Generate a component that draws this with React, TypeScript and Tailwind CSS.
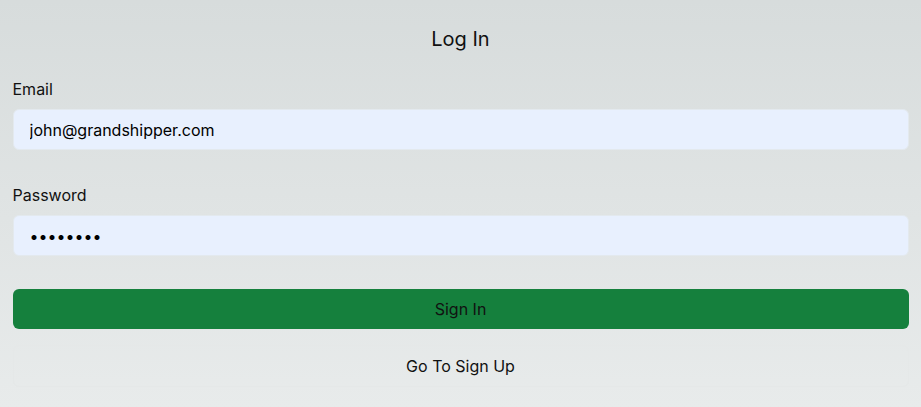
const App = () => {
  return (
    <div
      className="min-h-[407px] bg-gradient-to-b from-[#d7dcdc] to-[#e8ebeb] text-[#111] pt-[25px]"
      style={{ fontFamily: "Inter, 'Noto Sans', sans-serif" }}
    >
      <div className="max-w-4xl mx-auto">
        <h1 className="text-xl leading-7 text-center">Log In</h1>
        <form className="mt-6 flex flex-col">
          <label className="text-base leading-6 mb-2">Email</label>
          <input
            readOnly
            value="john@grandshipper.com"
            className="h-[41px] px-4 rounded-md bg-[#e8f0fe] border border-[#e3e9ee] text-base text-black outline-none"
          />
          <label className="text-base leading-6 mb-2 mt-[33px]">Password</label>
          <input
            readOnly
            type="password"
            value="12345678"
            className="h-[41px] px-4 rounded-md bg-[#e8f0fe] border border-[#e3e9ee] text-base text-black outline-none"
          />
          <button
            type="button"
            className="mt-[33px] h-10 rounded-md bg-[#15803d] text-base text-[#111]"
          >
            Sign In
          </button>
          <button
            type="button"
            className="mt-4 h-[42px] rounded-md border border-[#e5e8e8] text-base text-[#111]"
          >
            Go To Sign Up
          </button>
        </form>
      </div>
    </div>
  );
};

export default App;
